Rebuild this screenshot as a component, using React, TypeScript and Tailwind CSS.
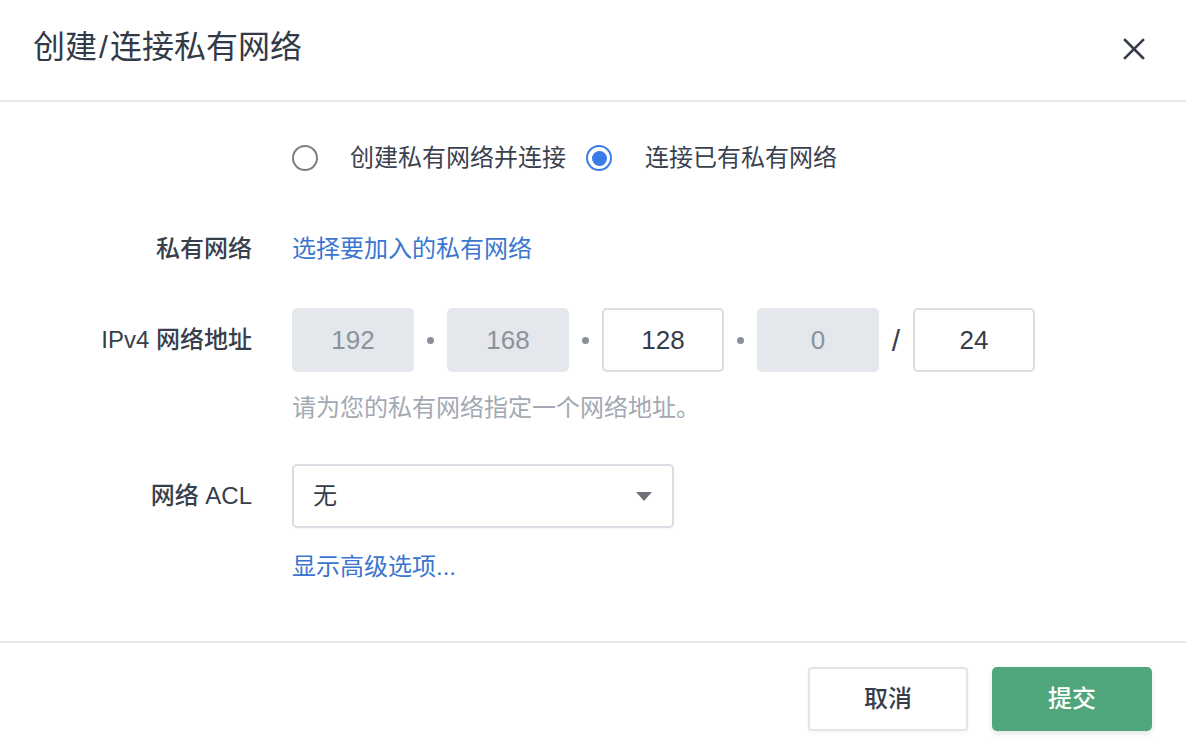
import React from "react";

const FONT = '"Liberation Sans", "Noto Sans CJK SC", sans-serif';

function Dot() {
  return (
    <div className="flex w-[33px] items-center justify-center">
      <span className="block h-[7px] w-[7px] rounded-full bg-[#8a9099]" />
    </div>
  );
}

function Box({ value, disabled }: { value: string; disabled?: boolean }) {
  return (
    <div
      className={
        disabled
          ? "flex h-[64px] w-[122px] items-center justify-center rounded-[5px] bg-[#e4e8ed] text-[26px] text-[#8b929b]"
          : "flex h-[64px] w-[122px] items-center justify-center rounded-[5px] border-2 border-[#dadde3] bg-white text-[26px] text-[#363d4a]"
      }
    >
      {value}
    </div>
  );
}

export default function App() {
  return (
    <div className="h-[746px] w-[1186px] overflow-hidden bg-white" style={{ fontFamily: FONT }}>
      {/* Header */}
      <div className="flex h-[102px] items-center justify-between border-b-2 border-[#e6e8eb] pl-[33px] pr-[40px]">
        <div className="pb-[6px] text-[32px] text-[#333a47]">
          创建<span className="mx-[2px]">/</span>连接私有网络
        </div>
        <svg width="24" height="24" viewBox="0 0 24 24" className="mt-[-2px]">
          <path d="M3 3 L21 21 M21 3 L3 21" stroke="#353c4a" strokeWidth="2.6" strokeLinecap="square" />
        </svg>
      </div>

      {/* Body */}
      <div className="pb-[60px] pt-[36px]">
        {/* Radio row */}
        <div className="flex h-[40px] items-center pl-[292px] text-[24px] text-[#3a414d]">
          <span className="block h-[26px] w-[26px] rounded-full border-2 border-[#7a7e85] bg-white" />
          <span className="ml-[32px]">创建私有网络并连接</span>
          <span className="ml-[20px] flex h-[26px] w-[26px] items-center justify-center rounded-full border-2 border-[#3b7be8] bg-white">
            <span className="block h-[15px] w-[15px] rounded-full bg-[#3b7be8]" />
          </span>
          <span className="ml-[33px]">连接已有私有网络</span>
        </div>

        {/* Private network */}
        <div className="mt-[51px] grid h-[40px] grid-cols-[252px_1fr] items-center gap-x-[40px]">
          <div className="text-right text-[24px] font-medium text-[#383f4b]">私有网络</div>
          <div className="text-[24px] text-[#3a76d0]">选择要加入的私有网络</div>
        </div>

        {/* IPv4 */}
        <div className="mt-[39px] grid grid-cols-[252px_1fr] items-center gap-x-[40px]">
          <div className="text-right text-[24px] font-medium text-[#383f4b]">IPv4 网络地址</div>
          <div className="flex items-center">
            <Box value="192" disabled />
            <Dot />
            <Box value="168" disabled />
            <Dot />
            <Box value="128" />
            <Dot />
            <Box value="0" disabled />
            <div className="flex w-[34px] items-center justify-center text-[30px] text-[#3a414d]">/</div>
            <Box value="24" />
          </div>
        </div>

        <div className="mt-[18px] grid h-[32px] grid-cols-[252px_1fr] items-center gap-x-[40px]">
          <div />
          <div className="text-[24px] text-[#a3a9b2]">请为您的私有网络指定一个网络地址。</div>
        </div>

        {/* ACL */}
        <div className="mt-[42px] grid grid-cols-[252px_1fr] items-center gap-x-[40px]">
          <div className="text-right text-[24px] font-medium text-[#383f4b]">网络 ACL</div>
          <div className="flex h-[64px] w-[382px] items-center justify-between rounded-[5px] border-2 border-[#dadde3] bg-white pl-[19px] pr-[20px] shadow-[0_1px_2px_rgba(0,0,0,0.04)]">
            <span className="text-[24px] text-[#363d4a]">无</span>
            <svg width="16" height="9" viewBox="0 0 16 9">
              <path d="M0 0 L16 0 L8 9 Z" fill="#6d727a" />
            </svg>
          </div>
        </div>

        <div className="mt-[21px] grid h-[32px] grid-cols-[252px_1fr] items-center gap-x-[40px]">
          <div />
          <div className="text-[24px] text-[#3a76d0]">显示高级选项...</div>
        </div>
      </div>

      {/* Footer */}
      <div className="flex justify-end gap-[24px] border-t-2 border-[#e6e8eb] pr-[34px] pt-[24px]">
        <div className="flex h-[64px] w-[160px] items-center justify-center rounded-[4px] border-2 border-[#e3e5e9] bg-white text-[24px] font-medium text-[#363d4a] shadow-[0_2px_4px_rgba(0,0,0,0.05)]">
          取消
        </div>
        <div className="flex h-[64px] w-[160px] items-center justify-center rounded-[5px] bg-[#4fa67b] text-[24px] font-medium text-white shadow-[0_3px_6px_rgba(0,0,0,0.1)]">
          提交
        </div>
      </div>
    </div>
  );
}
